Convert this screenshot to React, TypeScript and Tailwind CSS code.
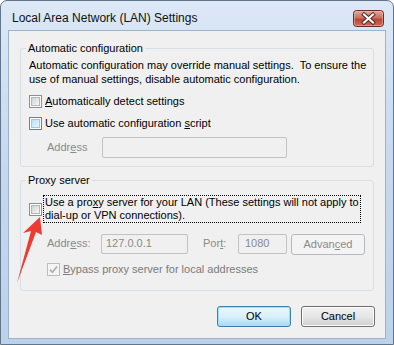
function Check({ kind }: { kind: "normal" | "hover" | "disabled" }) {
  if (kind === "disabled") {
    return (
      <span className="flex h-[13px] w-[13px] shrink-0 items-center justify-center border border-[#bcbcbc] bg-[#f4f4f4]">
        <svg width="9" height="9" viewBox="0 0 9 9">
          <path d="M1 4.6 L3.4 7.2 L8 1.4" fill="none" stroke="#acacac" strokeWidth="1.6" />
        </svg>
      </span>
    );
  }
  const hover = kind === "hover";
  return (
    <span
      className={`flex h-[13px] w-[13px] shrink-0 border bg-white p-[1px] ${
        hover ? "border-[#5586b0]" : "border-[#8f8f8f]"
      }`}
    >
      <span
        className={`block h-full w-full border ${
          hover
            ? "border-[#8fcaf0] bg-linear-to-br from-[#b7e0f8] to-[#eaf7fe]"
            : "border-[#b4b6b8] bg-linear-to-br from-[#d0d2d4] to-[#f7f7f7]"
        }`}
      />
    </span>
  );
}

function CloseButton() {
  return (
    <svg width="31" height="17" viewBox="0 0 31 17">
      <defs>
        <linearGradient id="cl" x1="0" y1="0" x2="0" y2="1">
          <stop offset="0" stopColor="#e6aa9c" />
          <stop offset="0.45" stopColor="#cf6e5e" />
          <stop offset="0.55" stopColor="#bb4535" />
          <stop offset="1" stopColor="#cf6f5a" />
        </linearGradient>
      </defs>
      <rect x="0.5" y="0.5" width="30" height="16" rx="3" fill="url(#cl)" stroke="#6b2a25" />
      <rect x="1.5" y="1.5" width="28" height="14" rx="2" fill="none" stroke="#f2c4b8" strokeOpacity="0.5" />
      <path d="M11 4.5 L20 12.5 M20 4.5 L11 12.5" stroke="#4a2420" strokeWidth="4" strokeLinecap="square" />
      <path d="M11 4.5 L20 12.5 M20 4.5 L11 12.5" stroke="#ffffff" strokeWidth="2.2" strokeLinecap="square" />
    </svg>
  );
}

function Arrow() {
  return (
    <svg className="pointer-events-none absolute left-0 top-0" width="394" height="345" viewBox="0 0 394 345">
      <polygon points="40,217 42,235 36,232 17,283 31,231 23,233" fill="#ee3a32" />
    </svg>
  );
}

export default function App() {
  return (
    <div className="relative h-[345px] w-[394px] overflow-hidden bg-white font-['Liberation_Sans',Arial,sans-serif] text-[11px] leading-[13px] text-black">
      <div className="flex h-[345px] w-[394px] flex-col rounded-t-[7px] border border-[#62758c] bg-linear-to-b from-[#dce8f6] via-[#c5d8ee] to-[#bcd2ea]">
        {/* title bar */}
        <div className="flex h-[29px] shrink-0 items-start justify-between pl-[11px] pr-[9px]">
          <span className="mt-[10px] text-[12px] leading-[15px] text-[#111]">Local Area Network (LAN) Settings</span>
          <span className="mt-[9px] flex">
            <CloseButton />
          </span>
        </div>

        {/* client */}
        <div className="mx-[7px] mb-[5px] flex flex-1 flex-col border border-[#9db3cc] bg-[#f0f0f0] px-[11px]">
          <fieldset className="mt-[10px] rounded-[3px] border border-[#d5dfe5] pb-[8px] pl-[8px] pt-[3px]">
            <legend className="-ml-[3px] px-[2px] leading-[14px]">Automatic configuration</legend>
            <p className="leading-[14px]">
              Automatic configuration may override manual settings.&nbsp; To ensure the
              <br />
              use of manual settings, disable automatic configuration.
            </p>
            <div className="mt-[9px] flex items-center gap-[3px]">
              <Check kind="normal" />
              <span>
                <u>A</u>utomatically detect settings
              </span>
            </div>
            <div className="mt-[9px] flex items-center gap-[3px]">
              <Check kind="hover" />
              <span>
                Use automatic configuration <u>s</u>cript
              </span>
            </div>
            <div className="mt-[7px] flex items-center pl-[18px]">
              <span className="w-[55px] text-[#8a8a8a]">
                Addr<u>e</u>ss
              </span>
              <div className="h-[21px] w-[185px] rounded-[2px] border border-[#c2c2c2] bg-[#f0f0f0]" />
            </div>
          </fieldset>

          <fieldset className="mt-[6px] rounded-[3px] border border-[#d5dfe5] pb-[14px] pl-[8px] pt-[8px]">
            <legend className="-ml-[3px] px-[2px] leading-[14px]">Proxy server</legend>
            <div className="flex items-center">
              <Check kind="normal" />
              <span className="ml-[1px] w-[318px] border border-dotted border-black pl-[1px]">
                Use a pro<u>x</u>y server for your LAN (These settings will not apply to
                <br />
                dial-up or VPN connections).
              </span>
            </div>
            <div className="mt-[9px] flex items-center pl-[18px] text-[#8a8a8a]">
              <span className="w-[54px]">
                Addr<u>e</u>ss:
              </span>
              <div className="flex h-[20px] w-[87px] items-center rounded-[2px] border border-[#c2c2c2] pl-[4px]">
                127.0.0.1
              </div>
              <span className="ml-[15px] w-[35px]">
                Por<u>t</u>:
              </span>
              <div className="flex h-[20px] w-[49px] items-center rounded-[2px] border border-[#c2c2c2] pl-[6px]">
                1080
              </div>
              <div className="ml-[4px] mt-[2px] flex h-[21px] w-[74px] items-center justify-center rounded-[3px] border border-[#b5b9bd] bg-[#f4f4f4] text-[#8a8a8a]">
                Advan<u>c</u>ed
              </div>
            </div>
            <div className="mt-[8px] flex items-center gap-[3px] pl-[18px] text-[#7a7a7a]">
              <Check kind="disabled" />
              <span>
                <u>B</u>ypass proxy server for local addresses
              </span>
            </div>
          </fieldset>

          <div className="-mr-[1px] mt-[15px] flex justify-end gap-[10px]">
            <div className="flex h-[21px] w-[74px] items-center justify-center rounded-[3px] border border-[#3c7fb1] bg-linear-to-b from-[#eaf6fd] via-[#d9f0fc] to-[#a7d9f5] shadow-[inset_0_0_0_1px_#9ee0fc]">
              OK
            </div>
            <div className="flex h-[21px] w-[74px] items-center justify-center rounded-[3px] border border-[#707070] bg-linear-to-b from-[#f2f2f2] via-[#e6e6e6] to-[#d0d0d0] shadow-[inset_0_0_0_1px_#fcfcfc]">
              Cancel
            </div>
          </div>
        </div>
      </div>
      <Arrow />
    </div>
  );
}
